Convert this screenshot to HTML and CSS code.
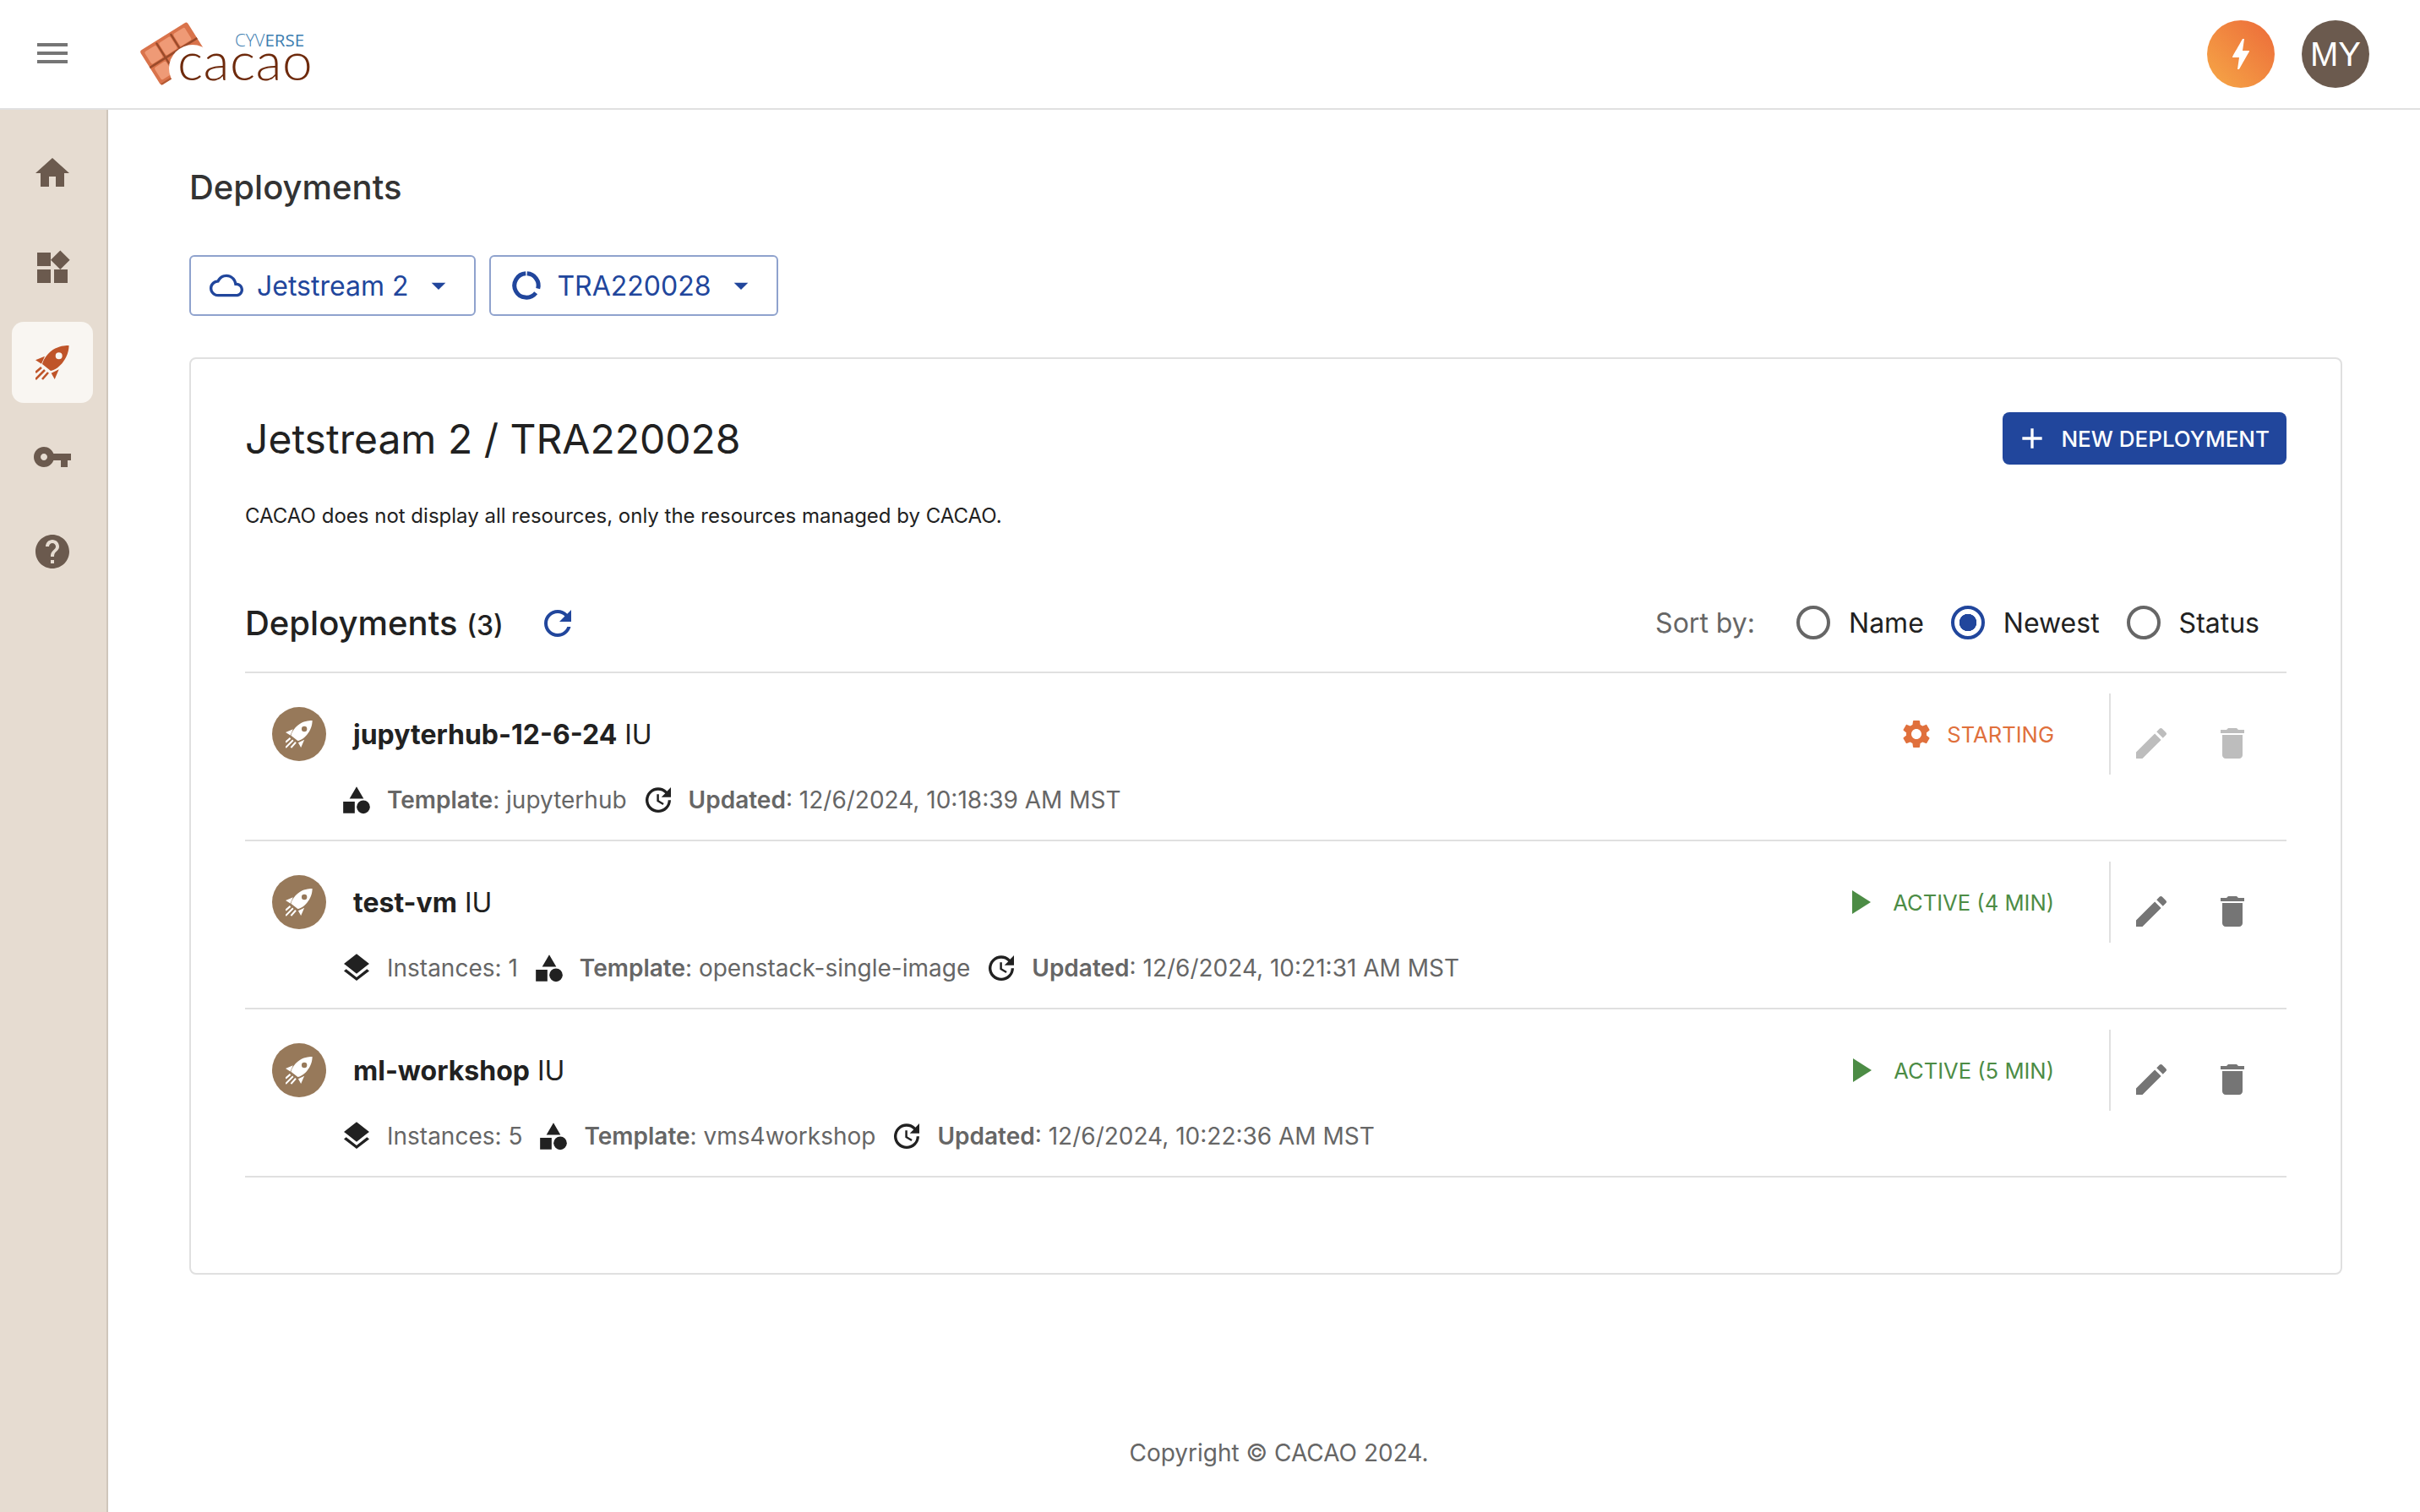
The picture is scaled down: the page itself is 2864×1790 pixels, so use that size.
FILE: index.html
```html
<!doctype html>
<html>
<head>
    <meta charset="utf-8">
    <title>CACAO Deployments</title>
    <link rel="stylesheet" href="styles.css">
</head>
<body>

<svg class="defs" xmlns="http://www.w3.org/2000/svg">
    <symbol id="i-rocket" viewBox="0 0 40 41">
        <path fill-rule="evenodd" d="M39.500 0C39.500 0 28-1 18 7 12 12 9 18 8 22L18 30C23 29 29 25 33 19 40 10 39.500 0 39.500 0zM27.700 8.300a4 4 0 1 1 0 8 4 4 0 0 1 0-8z"/>
        <path d="M0 17.300l11-4.600-4 9zM18.700 32.700l9-4.400-5 11.700z"/>
        <path d="M7 26L0 32M11 29L0 40M15 32l-7 8" stroke="currentColor" stroke-width="2.6" fill="none"/>
    </symbol>
    <symbol id="i-template" viewBox="0 0 24 24">
        <path d="M12 2.500l5 8.600H7zM2.500 13.200h8.200v8.300H2.500z"/>
        <circle cx="16.800" cy="17" r="4.700"/>
    </symbol>
    <symbol id="i-update" viewBox="0 0 24 24"><path d="M21 10.120h-6.780l2.740-2.820c-2.730-2.700-7.150-2.800-9.880-.1-2.730 2.710-2.730 7.080 0 9.790s7.150 2.710 9.880 0C18.320 15.650 19 14.080 19 12.100h2c0 1.980-.88 4.550-2.640 6.290-3.510 3.480-9.210 3.480-12.720 0-3.500-3.470-3.530-9.110-.02-12.580s9.140-3.470 12.650 0L21 3v7.120zM12.500 8v4.250l3.500 2.080-.72 1.210L11 13V8h1.500z"/></symbol>
    <symbol id="i-layers" viewBox="0 0 24 24"><path d="M11.990 18.540l-7.370-5.730L3 14.070l9 7 9-7-1.630-1.270-7.380 5.740zM12 16l7.360-5.730L21 9l-9-7-9 7 1.630 1.270L12 16z"/></symbol>
    <symbol id="i-edit" viewBox="0 0 24 24"><path d="M3 17.250V21h3.750L17.810 9.940l-3.750-3.750L3 17.250zM20.710 7.040c.39-.39.39-1.020 0-1.410l-2.340-2.340c-.39-.39-1.020-.39-1.410 0l-1.830 1.830 3.750 3.750 1.830-1.830z"/></symbol>
    <symbol id="i-delete" viewBox="0 0 24 24"><path d="M6 19c0 1.100.9 2 2 2h8c1.100 0 2-.9 2-2V7H6v12zM19 4h-3.500l-1-1h-5l-1 1H5v2h14V4z"/></symbol>
    <symbol id="i-play" viewBox="0 0 24 24"><path d="M8 5v14l11-7z"/></symbol>
    <symbol id="i-caret" viewBox="0 0 24 24"><path d="M7 10l5 5 5-5z"/></symbol>
</svg>

<header class="appbar">
    <svg class="menu-icon" viewBox="0 0 24 24"><path d="M3 18h18v-2H3v2zm0-5h18v-2H3v2zm0-7v2h18V6H3z"/></svg>
    <div class="logo">
        <svg class="logo-bar" viewBox="0 0 80 80">
            <g transform="rotate(-32 40 40)">
                <rect x="8" y="16" width="66" height="48" rx="3" fill="#d9734b"/>
                <rect x="12" y="20" width="16" height="17" rx="2" fill="#ef9a76"/>
                <rect x="32" y="20" width="16" height="17" rx="2" fill="#ef9a76"/>
                <rect x="52" y="20" width="16" height="17" rx="2" fill="#ef9a76"/>
                <rect x="12" y="42" width="16" height="17" rx="2" fill="#ef9a76"/>
                <path d="M8 39h66M30 18v44M50 18v24" stroke="#9a4a2a" stroke-width="2.400" fill="none"/>
                <path d="M9 63h62" stroke="#b45a34" stroke-width="2" fill="none"/>
            </g>
            <circle cx="63" cy="57" r="28" fill="#fff"/>
        </svg>
        <span class="logo-cyverse"><span>CYV</span>ERSE</span>
        <span class="logo-name">cacao</span>
    </div>
    <div class="appbar-right">
        <span class="circle bolt">
            <svg viewBox="0 0 24 24"><path d="M11 21h-1l1-7H7.500c-.58 0-.57-.32-.38-.66.19-.34.05-.08.07-.12C8.480 10.940 10.420 7.540 13 3h1l-1 7h3.500c.49 0 .56.33.47.51l-.07.15C12.960 17.550 11 21 11 21z"/></svg>
        </span>
        <span class="circle user">MY</span>
    </div>
</header>

<div class="layout">
    <nav class="sidebar">
        <a class="nav-item"><svg viewBox="0 0 24 24"><path d="M10 20v-6h4v6h5v-8h3L12 3 2 12h3v8z"/></svg></a>
        <a class="nav-item"><svg viewBox="0 0 24 24"><path d="M13 13v8h8v-8h-8zM3 21h8v-8H3v8zM3 3v8h8V3H3zm13.660-1.310L11 7.340 16.660 13l5.660-5.660-5.660-5.650z"/></svg></a>
        <a class="nav-item active"><svg class="rocket" viewBox="0 0 40 41"><use href="#i-rocket"/></svg></a>
        <a class="nav-item"><svg viewBox="0 0 24 24"><path d="M12.650 10C11.830 7.670 9.610 6 7 6c-3.310 0-6 2.690-6 6s2.690 6 6 6c2.610 0 4.830-1.670 5.650-4H17v4h4v-4h2v-4H12.650zM7 14c-1.100 0-2-.9-2-2s.9-2 2-2 2 .9 2 2-.9 2-2 2z"/></svg></a>
        <a class="nav-item"><svg viewBox="0 0 24 24"><path d="M12 2C6.480 2 2 6.480 2 12s4.480 10 10 10 10-4.480 10-10S17.520 2 12 2zm1 17h-2v-2h2v2zm2.070-7.750l-.9.920C13.450 12.900 13 13.500 13 15h-2v-.5c0-1.100.45-2.100 1.170-2.830l1.240-1.260c.37-.36.59-.86.59-1.410 0-1.100-.9-2-2-2s-2 .9-2 2H8c0-2.210 1.790-4 4-4s4 1.790 4 4c0 .88-.36 1.680-.93 2.250z"/></svg></a>
    </nav>

    <main class="main">
        <h1 class="page-title">Deployments</h1>

        <div class="filters">
            <button class="select">
                <svg class="select-icon" viewBox="0 0 24 24"><path d="M19.350 10.040C18.670 6.590 15.640 4 12 4 9.110 4 6.600 5.640 5.350 8.040 2.340 8.360 0 10.910 0 14c0 3.310 2.690 6 6 6h13c2.760 0 5-2.240 5-5 0-2.640-2.050-4.780-4.650-4.960zM19 18H6c-2.210 0-4-1.790-4-4 0-2.050 1.530-3.760 3.560-3.970l1.070-.11.5-.95C8.080 7.140 9.940 6 12 6c2.620 0 4.880 1.860 5.390 4.430l.3 1.500 1.530.11c1.560.1 2.780 1.410 2.780 2.960 0 1.650-1.350 3-3 3z"/></svg>
                Jetstream 2
                <svg class="select-icon"><use href="#i-caret"/></svg>
            </button>
            <button class="select">
                <svg class="select-icon" viewBox="0 0 24 24"><path d="M12.440 3.510A8.500 8.500 0 0 1 20.210 14.200M18.700 17.240A8.500 8.500 0 1 1 11.560 3.510" fill="none" stroke="currentColor" stroke-width="3"/></svg>
                TRA220028
                <svg class="select-icon"><use href="#i-caret"/></svg>
            </button>
        </div>

        <section class="card">
            <div class="card-head">
                <h2 class="card-title">Jetstream 2 / TRA220028</h2>
                <button class="new-btn">
                    <svg viewBox="0 0 24 24"><path d="M19 13h-6v6h-2v-6H5v-2h6V5h2v6h6v2z"/></svg>
                    NEW DEPLOYMENT
                </button>
            </div>
            <p class="card-note">CACAO does not display all resources, only the resources managed by CACAO.</p>

            <div class="list-head">
                <h3 class="list-title">Deployments <small>(3)</small></h3>
                <svg class="refresh" viewBox="0 0 24 24"><path d="M17.650 6.350C16.200 4.900 14.210 4 12 4c-4.420 0-7.990 3.580-7.990 8s3.570 8 7.990 8c3.730 0 6.840-2.550 7.730-6h-2.080c-.82 2.330-3.040 4-5.650 4-3.310 0-6-2.690-6-6s2.690-6 6-6c1.660 0 3.140.69 4.220 1.780L13 11h7V4l-2.350 2.350z"/></svg>
                <div class="sort">
                    <span class="sort-label">Sort by:</span>
                    <label class="radio"><i></i>Name</label>
                    <label class="radio checked"><i></i>Newest</label>
                    <label class="radio"><i></i>Status</label>
                </div>
            </div>

            <div class="row">
                <div class="row-top">
                    <span class="avatar"><svg class="avatar-rocket"><use href="#i-rocket"/></svg></span>
                    <div class="name"><b>jupyterhub-12-6-24</b> IU</div>
                    <div class="status starting">
                        <svg class="status-gear" viewBox="0 0 24 24"><path d="M19.140 12.940c.04-.3.06-.61.06-.94 0-.32-.02-.64-.07-.94l2.030-1.580c.18-.14.23-.41.12-.61l-1.920-3.320c-.12-.22-.37-.29-.59-.22l-2.390.96c-.5-.38-1.030-.7-1.620-.94l-.36-2.540c-.04-.24-.24-.41-.48-.41h-3.840c-.24 0-.43.17-.47.41l-.36 2.540c-.59.24-1.130.57-1.620.94l-2.390-.96c-.22-.08-.47 0-.59.22L2.740 8.870c-.12.21-.08.47.12.61l2.030 1.580c-.05.3-.09.63-.09.94s.02.64.07.94l-2.030 1.580c-.18.14-.23.41-.12.61l1.920 3.320c.12.22.37.29.59.22l2.390-.96c.5.38 1.030.7 1.620.94l.36 2.540c.05.24.24.41.48.41h3.840c.24 0 .44-.17.47-.41l.36-2.540c.59-.24 1.130-.56 1.620-.94l2.390.96c.22.08.47 0 .59-.22l1.920-3.320c.12-.22.07-.47-.12-.61l-2.010-1.580zM12 15.600c-1.980 0-3.600-1.620-3.600-3.600s1.620-3.600 3.600-3.600 3.600 1.620 3.600 3.600-1.620 3.600-3.600 3.600z"/></svg>
                        STARTING
                    </div>
                    <div class="actions disabled">
                        <svg><use href="#i-edit"/></svg>
                        <svg><use href="#i-delete"/></svg>
                    </div>
                </div>
                <div class="meta">
                    <span class="meta-item"><svg><use href="#i-template"/></svg><span><b>Template</b>: jupyterhub</span></span>
                    <span class="meta-item"><svg><use href="#i-update"/></svg><span><b>Updated</b>: 12/6/2024, 10:18:39 AM MST</span></span>
                </div>
            </div>

            <div class="row">
                <div class="row-top">
                    <span class="avatar"><svg class="avatar-rocket"><use href="#i-rocket"/></svg></span>
                    <div class="name"><b>test-vm</b> IU</div>
                    <div class="status active">
                        <svg class="status-play"><use href="#i-play"/></svg>
                        ACTIVE (4 MIN)
                    </div>
                    <div class="actions">
                        <svg><use href="#i-edit"/></svg>
                        <svg><use href="#i-delete"/></svg>
                    </div>
                </div>
                <div class="meta">
                    <span class="meta-item"><svg><use href="#i-layers"/></svg><span>Instances: 1</span></span>
                    <span class="meta-item"><svg><use href="#i-template"/></svg><span><b>Template</b>: openstack-single-image</span></span>
                    <span class="meta-item"><svg><use href="#i-update"/></svg><span><b>Updated</b>: 12/6/2024, 10:21:31 AM MST</span></span>
                </div>
            </div>

            <div class="row">
                <div class="row-top">
                    <span class="avatar"><svg class="avatar-rocket"><use href="#i-rocket"/></svg></span>
                    <div class="name"><b>ml-workshop</b> IU</div>
                    <div class="status active">
                        <svg class="status-play"><use href="#i-play"/></svg>
                        ACTIVE (5 MIN)
                    </div>
                    <div class="actions">
                        <svg><use href="#i-edit"/></svg>
                        <svg><use href="#i-delete"/></svg>
                    </div>
                </div>
                <div class="meta">
                    <span class="meta-item"><svg><use href="#i-layers"/></svg><span>Instances: 5</span></span>
                    <span class="meta-item"><svg><use href="#i-template"/></svg><span><b>Template</b>: vms4workshop</span></span>
                    <span class="meta-item"><svg><use href="#i-update"/></svg><span><b>Updated</b>: 12/6/2024, 10:22:36 AM MST</span></span>
                </div>
            </div>
        </section>

        <footer class="copyright">Copyright © CACAO 2024.</footer>
    </main>
</div>

</body>
</html>
```

FILE: styles.css
```css
* { box-sizing: border-box; }
html, body { height: 100%; }
body {
    margin: 0;
    display: flex;
    flex-direction: column;
    font-family: Inter, "Liberation Sans", sans-serif;
    color: #212121;
    background: #fff;
}
svg { display: block; fill: currentColor; flex: none; }
.defs { width: 0; height: 0; position: absolute; }
h1, h2, h3, p { margin: 0; }

/* top bar */
.appbar {
    height: 130px;
    flex: none;
    display: flex;
    align-items: center;
    padding: 0 60px 0 38px;
    border-bottom: 2px solid #e0e0e0;
}
.menu-icon { width: 48px; height: 48px; color: #757575; margin-top: -2px; }
.logo { position: relative; width: 204px; height: 80px; margin-left: 79px; }
.logo-bar { position: absolute; left: 0; top: 0; width: 80px; height: 80px; }
.logo-cyverse {
    position: absolute; left: 113px; top: 14px;
    font: 400 20.500px/18px "Open Sans", sans-serif;
    color: #3d7db0;
}
.logo-cyverse span { font-weight: 300; }
.logo-name {
    position: absolute; left: 45px; top: 32px;
    font: 300 64px/30px Lato, sans-serif;
    color: #6e2a0c;
    letter-spacing: .4px;
}
.appbar-right { margin-left: auto; display: flex; gap: 32px; }
.circle {
    width: 80px; height: 80px; border-radius: 50%;
    display: flex; align-items: center; justify-content: center;
    color: #fff;
}
.circle svg { width: 48px; height: 48px; }
.bolt { background: linear-gradient(45deg, #f6a847, #ec6a39); }
.user { background: #6b5a4e; font: 40px "Liberation Sans", sans-serif; }

/* sidebar */
.layout { flex: 1; display: flex; min-height: 0; }
.sidebar {
    width: 128px;
    flex: none;
    background: #e6dcd1;
    border-right: 2px solid #cfc6bb;
    padding: 27px 16px 0 14px;
    display: flex;
    flex-direction: column;
    gap: 16px;
}
.nav-item {
    width: 96px; height: 96px;
    border-radius: 14px;
    display: flex; align-items: center; justify-content: center;
    color: #6b5a4e;
}
.nav-item svg { width: 48px; height: 48px; }
.nav-item.active { background: #f9f6f2; color: #bf5429; }
.nav-item .rocket { width: 40px; height: 41px; }

/* main */
.main {
    flex: 1;
    min-width: 0;
    display: flex;
    flex-direction: column;
    padding: 64px 92px 0 96px;
}
.page-title { font-size: 40px; font-weight: 500; line-height: 56px; color: #333; }
.filters { display: flex; gap: 16px; margin-top: 52px; }
.select {
    height: 72px;
    display: flex; align-items: center;
    gap: 16px;
    padding: 0 22px;
    font: 400 32px Inter, sans-serif;
    color: #21469c;
    background: #fff;
    border: 2px solid #8fa2cd;
    border-radius: 6px;
}
.select-icon { width: 40px; height: 40px; }

.card {
    margin-top: 49px;
    height: 1086px;
    border: 2px solid #e0e0e0;
    border-radius: 8px;
    padding: 62px 64px 0;
}
.card-head { display: flex; align-items: center; justify-content: space-between; height: 64px; }
.card-title { font-size: 48px; font-weight: 400; }
.new-btn {
    height: 62px;
    display: flex; align-items: center;
    gap: 14px;
    padding: 0 20px 0 15px;
    background: #21469c;
    color: #fff;
    border: 0;
    border-radius: 8px;
    font: 500 26px Inter, sans-serif;
}
.new-btn svg { width: 40px; height: 40px; }
.card-note { font-size: 24px; line-height: 36px; margin-top: 42px; }

.list-head {
    display: flex; align-items: center;
    height: 102px;
    margin-top: 66px;
    border-bottom: 2px solid #e0e0e0;
    padding-bottom: 16px;
}
.list-title { font-size: 40px; font-weight: 500; }
.list-title small { font-size: 32px; }
.refresh { width: 48px; height: 48px; margin: 2px 0 0 40px; color: #21469c; }
.sort { margin-left: auto; display: flex; align-items: center; }
.sort-label { font-size: 32px; color: #666; margin-right: 49px; }
.radio { display: flex; align-items: center; gap: 22px; font-size: 32px; padding-right: 32px; }
.radio i {
    width: 40px; height: 40px;
    border: 4px solid #666;
    border-radius: 50%;
}
.radio.checked i {
    border-color: #21469c;
    background: radial-gradient(circle, #21469c 10px, transparent 10.500px);
}

/* rows */
.row { height: 199px; padding-top: 24px; border-bottom: 2px solid #e0e0e0; }
.row-top { display: flex; align-items: center; height: 96px; padding-left: 32px; }
.avatar {
    width: 64px; height: 64px; border-radius: 50%;
    background: #97795a;
    color: #fff;
    display: flex; align-items: center; justify-content: center;
}
.avatar-rocket { width: 32px; height: 33px; }
.name { font-size: 32px; margin-left: 32px; }
.name b { font-weight: 700; }
.status {
    margin-left: auto;
    margin-right: 65px;
    display: flex; align-items: center; gap: 16px;
    font-size: 25.600px;
}
.status.starting { color: #e0703c; }
.status.active { color: #4c8c45; }
.status-gear { width: 40px; height: 40px; }
.status-play { width: 48px; height: 48px; }
.actions {
    align-self: stretch;
    display: flex;
    gap: 48px;
    padding: 35px 40px 0 24px;
    border-left: 2px solid #e0e0e0;
    color: #757575;
}
.actions svg { width: 48px; height: 48px; }
.actions.disabled { color: #bdbdbd; }
.meta {
    display: flex; align-items: center; gap: 17px;
    height: 60px;
    padding-left: 112px;
    font-size: 28px;
    color: #666;
}
.meta-item { display: flex; align-items: center; gap: 16px; }
.meta-item svg { width: 40px; height: 40px; color: #212121; }
.meta b { font-weight: 600; }

.copyright {
    margin-top: auto;
    margin-bottom: 52px;
    padding-left: 31px;
    text-align: center;
    font-size: 28px;
    line-height: 36px;
    color: #666;
}
```
